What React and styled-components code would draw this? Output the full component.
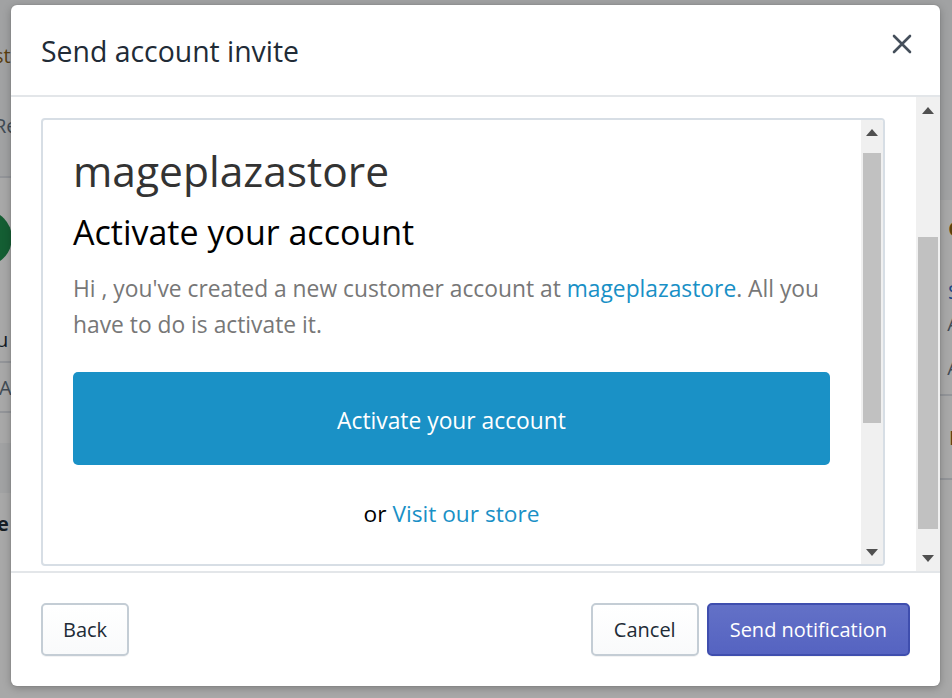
import React from "react";
import styled, { createGlobalStyle } from "styled-components";

const GlobalStyle = createGlobalStyle`
  html, body { margin: 0; padding: 0; }
  body { font-family: "Open Sans", "Noto Sans", sans-serif; background: #f4f6f8; }
  * { box-sizing: border-box; }
`;

const Stage = styled.div`
  position: relative;
  width: 952px;
  height: 698px;
  overflow: hidden;
  background: #f4f6f8;
`;

/* underlying page (only its edges show round the modal) */
const UnderPage = styled.div`
  display: grid;
  grid-template-columns: 470px 1fr;
  height: 100%;
  color: #212b36;
  font-size: 20px;
`;

const UnderCol = styled.div`
  display: flex;
  flex-direction: column;
`;

const UnderLine = styled.div`
  flex: none;
  height: ${(p) => p.$h}px;
  width: 100%;
  display: flex;
  align-items: center;
  justify-content: ${(p) => (p.$right ? "flex-end" : "flex-start")};
  color: ${(p) => p.$color || "#212b36"};
  font-weight: ${(p) => p.$weight || 400};
  background: ${(p) => p.$bg || "transparent"};
  border-bottom: ${(p) => (p.$line ? "2px solid #dfe3e8" : "none")};
`;

const Peek = styled.span`
  margin-left: ${(p) => p.$ml || 0}px;
  margin-right: ${(p) => p.$mr || 0}px;
`;

const GreenDot = styled.div`
  width: 56px;
  height: 56px;
  border-radius: 50%;
  background: #1f8f4e;
  margin-left: -44px;
`;

const Backdrop = styled.div`
  position: absolute;
  inset: 0;
  background: rgba(0, 0, 0, 0.34);
  display: flex;
  align-items: flex-start;
  padding: 5px 0 0 11px;
`;

const Modal = styled.div`
  width: 929px;
  height: 681px;
  background: #fff;
  border-radius: 6px;
  box-shadow: 0 0 0 1px rgba(63, 63, 68, 0.05), 0 2px 8px rgba(0, 0, 0, 0.25);
  display: flex;
  flex-direction: column;
  overflow: hidden;
`;

const Header = styled.div`
  height: 92px;
  flex: none;
  display: flex;
  align-items: center;
  justify-content: space-between;
  padding: 0 26px 0 30px;
  border-bottom: 2px solid #e3e6e9;
`;

const Title = styled.h2`
  margin: 0;
  font-size: 28.4px;
  font-weight: 400;
  color: #212b36;
  line-height: 1;
  padding-top: 3px;
`;

const CloseButton = styled.button`
  width: 24px;
  height: 24px;
  padding: 0;
  border: none;
  background: none;
  display: flex;
  align-items: center;
  justify-content: center;
  margin-top: -12px;
`;

const Body = styled.div`
  flex: 1;
  display: flex;
  min-height: 0;
`;

const BodyContent = styled.div`
  flex: 1;
  padding: 21px 31px 0 30px;
  display: flex;
  flex-direction: column;
  min-width: 0;
`;

const Frame = styled.div`
  flex: 1;
  border: 2px solid #d7dee5;
  border-radius: 4px;
  margin-bottom: 5px;
  display: flex;
  overflow: hidden;
  min-height: 0;
`;

const Email = styled.div`
  flex: 1;
  padding: 26px 31px 0 30px;
  display: flex;
  flex-direction: column;
  min-width: 0;
  overflow: hidden;
`;

const Shop = styled.div`
  font-size: 42.5px;
  line-height: 50px;
  color: #333;
  flex: none;
`;

const EmailHeading = styled.h1`
  margin: 14px 0 0;
  font-size: 34px;
  line-height: 44px;
  font-weight: 400;
  color: #000;
  flex: none;
`;

const Para = styled.p`
  margin: 17px 0 0;
  font-size: 22.8px;
  line-height: 36px;
  color: #777;
  flex: none;
`;

const Link = styled.a`
  color: #1990c6;
  text-decoration: none;
`;

const ActivateButton = styled.a`
  flex: none;
  margin-top: 29px;
  height: 93px;
  padding-top: 3px;
  border-radius: 5px;
  background: #1a91c6;
  color: #fff;
  font-size: 22.8px;
  font-weight: 500;
  display: flex;
  align-items: center;
  justify-content: center;
  text-decoration: none;
`;

const OrLine = styled.div`
  flex: none;
  margin-top: 31px;
  text-align: center;
  font-size: 22.7px;
  line-height: 36px;
  color: #000;
`;

const ScrollBar = styled.div`
  flex: none;
  width: ${(p) => p.$w}px;
  background: #f0f0f0;
  display: flex;
  flex-direction: column;
`;

const Arrow = styled.div`
  flex: none;
  height: ${(p) => p.$h}px;
  display: flex;
  align-items: center;
  justify-content: center;
`;

const Track = styled.div`
  flex: 1;
  display: flex;
  flex-direction: column;
  padding: 0 2px;
`;

const Thumb = styled.div`
  background: #c1c1c1;
  margin-top: ${(p) => p.$top}px;
  height: ${(p) => p.$h}px;
`;

const Footer = styled.div`
  flex: none;
  height: 115px;
  border-top: 2px solid #e3e6e9;
  display: flex;
  align-items: flex-start;
  justify-content: space-between;
  padding: 30px 30px 0 30px;
`;

const Group = styled.div`
  display: flex;
  gap: 8px;
`;

const Button = styled.button`
  height: 53px;
  padding: 0 ${(p) => p.$px}px;
  border-radius: 5px;
  font-family: inherit;
  font-size: 20px;
  cursor: pointer;
  border: 2px solid ${(p) => (p.$primary ? "#3f4eae" : "#c4cdd5")};
  color: ${(p) => (p.$primary ? "#fff" : "#212b36")};
  background: ${(p) =>
    p.$primary
      ? "linear-gradient(180deg, #6371c7, #5563c1)"
      : "linear-gradient(180deg, #fff, #f9fafb)"};
  box-shadow: 0 1px 0 rgba(22, 29, 37, 0.05);
`;

const Tri = ({ up }) => (
  <svg width="12" height="7" viewBox="0 0 12 7">
    <polygon points={up ? "0,7 6,0 12,7" : "0,0 12,0 6,7"} fill="#505050" />
  </svg>
);

const Scroll = ({ w, arrowH, top, h }) => (
  <ScrollBar $w={w}>
    <Arrow $h={arrowH}>
      <Tri up />
    </Arrow>
    <Track>
      <Thumb $top={top} $h={h} />
    </Track>
    <Arrow $h={arrowH}>
      <Tri />
    </Arrow>
  </ScrollBar>
);

export default function App() {
  return (
    <>
      <GlobalStyle />
      <Stage>
        <UnderPage>
          <UnderCol>
            <UnderLine $h={40} />
            <UnderLine $h={30} $color="#8a6116">
              <Peek $ml={-6}>st</Peek>
            </UnderLine>
            <UnderLine $h={40} />
            <UnderLine $h={30} $color="#637381">
              <Peek $ml={-6}>Re</Peek>
            </UnderLine>
            <UnderLine $h={38} $line />
            <UnderLine $h={120} $bg="#fff">
              <GreenDot />
            </UnderLine>
            <UnderLine $h={20} $bg="#fff" />
            <UnderLine $h={45} $bg="#fff" $line>
              <Peek $ml={-4}>u</Peek>
            </UnderLine>
            <UnderLine $h={50} $bg="#fff" $line $color="#637381">
              <Peek $ml={-1}>A</Peek>
            </UnderLine>
            <UnderLine $h={30} $bg="#fff" />
            <UnderLine $h={50} />
            <UnderLine $h={60} $bg="#fff" $weight={700}>
              <Peek $ml={-3}>e</Peek>
            </UnderLine>
            <UnderLine $h={200} $bg="#fff" />
          </UnderCol>
          <UnderCol>
            <UnderLine $h={200} />
            <UnderLine $h={56} $bg="#fff" $weight={700} $color="#8a6116" $right>
              <Peek $mr={-9}>C</Peek>
            </UnderLine>
            <UnderLine $h={20} $bg="#fff" />
            <UnderLine $h={30} $bg="#fff" $color="#2c6ecb" $right>
              <Peek $mr={-7}>S</Peek>
            </UnderLine>
            <UnderLine $h={34} $bg="#fff" $color="#637381" $right>
              <Peek $mr={-8}>A</Peek>
            </UnderLine>
            <UnderLine $h={56} $bg="#fff" $color="#637381" $line $right>
              <Peek $mr={-8}>A</Peek>
            </UnderLine>
            <UnderLine $h={84} $bg="#fff" $color="#8a6116" $line $right>
              <Peek $mr={-8}>E</Peek>
            </UnderLine>
            <UnderLine $h={230} $bg="#fff" />
          </UnderCol>
        </UnderPage>

        <Backdrop>
          <Modal>
            <Header>
              <Title>Send account invite</Title>
              <CloseButton aria-label="Close">
                <svg width="20" height="20" viewBox="0 0 20 20">
                  <path
                    d="M2 2 L18 18 M18 2 L2 18"
                    stroke="#454f5b"
                    strokeWidth="2.6"
                    strokeLinecap="round"
                  />
                </svg>
              </CloseButton>
            </Header>
            <Body>
              <BodyContent>
                <Frame>
                  <Email>
                    <Shop>mageplazastore</Shop>
                    <EmailHeading>Activate your account</EmailHeading>
                    <Para>
                      Hi , you've created a new customer account at{" "}
                      <Link href="#">mageplazastore</Link>. All you have to do
                      is activate it.
                    </Para>
                    <ActivateButton href="#">Activate your account</ActivateButton>
                    <OrLine>
                      or <Link href="#">Visit our store</Link>
                    </OrLine>
                  </Email>
                  <Scroll w={22} arrowH={24} top={9} h={270} />
                </Frame>
              </BodyContent>
              <Scroll w={24} arrowH={26} top={114} h={292} />
            </Body>
            <Footer>
              <Button $px={20}>Back</Button>
              <Group>
                <Button $px={21}>Cancel</Button>
                <Button $px={21} $primary>
                  Send notification
                </Button>
              </Group>
            </Footer>
          </Modal>
        </Backdrop>
      </Stage>
    </>
  );
}
